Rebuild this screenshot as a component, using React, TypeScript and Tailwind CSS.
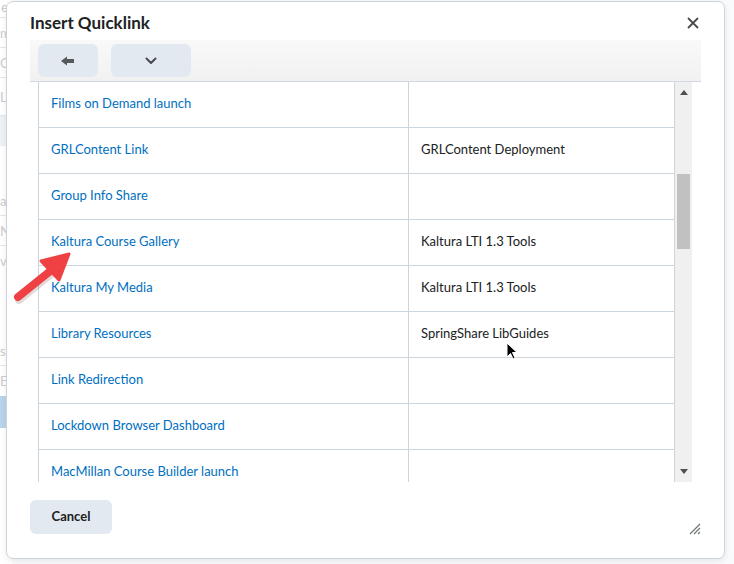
import React from 'react';

const rows: [string, string][] = [
  ['Films on Demand launch', ''],
  ['GRLContent Link', 'GRLContent Deployment'],
  ['Group Info Share', ''],
  ['Kaltura Course Gallery', 'Kaltura LTI 1.3 Tools'],
  ['Kaltura My Media', 'Kaltura LTI 1.3 Tools'],
  ['Library Resources', 'SpringShare LibGuides'],
  ['Link Redirection', ''],
  ['Lockdown Browser Dashboard', ''],
  ['MacMillan Course Builder launch', ''],
];

export default function App() {
  return (
    <div className="relative h-[564px] w-[734px] overflow-hidden bg-[#f9fafb] font-['Lato','Noto_Sans',sans-serif]">
      {/* page behind the modal */}
      <div className="flex h-full w-[12px] flex-col bg-white text-[13px] text-[#c9ccd0]">
        <div className="h-[18px] border-b border-[#e3e6ea] pl-[1px] leading-[14px]">e</div>
        <div className="h-[30px] border-b border-[#e3e6ea] leading-[30px]">m</div>
        <div className="h-[30px] border-b border-[#e3e6ea] leading-[30px]">C</div>
        <div className="h-[38px] border-b border-[#e3e6ea] leading-[38px]">L</div>
        <div className="h-[30px] bg-[#eef1f4]" />
        <div className="h-[40px]" />
        <div className="h-[30px] border-b border-[#e3e6ea] leading-[30px]">a</div>
        <div className="h-[30px] border-b border-[#e3e6ea] leading-[30px]">N</div>
        <div className="h-[30px] leading-[30px]">v</div>
        <div className="h-[60px]" />
        <div className="h-[30px] border-b border-[#e3e6ea] leading-[30px]">s</div>
        <div className="h-[30px] leading-[30px]">E</div>
        <div className="h-[32px] bg-[#b9d3ea]" />
      </div>

      {/* modal */}
      <div className="absolute left-[6px] top-[1px] flex h-[558px] w-[719px] flex-col rounded-[7px] border border-[#cdd5dc] bg-white shadow-[0_2px_6px_rgba(0,0,0,0.08)]">
        <div className="flex h-[38px] items-center justify-between pl-[23px] pr-[25px] pt-[3px]">
          <h1 className="text-[17px] font-bold text-[#202122]">Insert Quicklink</h1>
          <svg width="12" height="12" viewBox="0 0 12 12" className="text-[#494c4e]">
            <path d="M1.5 1.5L10.5 10.5M10.5 1.5L1.5 10.5" stroke="currentColor" strokeWidth="1.8" strokeLinecap="round" />
          </svg>
        </div>

        <div className="mx-[23px] flex h-[42px] items-center gap-[13px] border-b border-[#d3d9e3] bg-gradient-to-b from-[#f9f9f9] to-[#f1f1f1] px-[8px]">
          <button className="flex h-[33px] w-[60px] items-center justify-center rounded-[6px] bg-[#e3e9f1]">
            <svg width="14" height="10" viewBox="0 0 14 10">
              <path d="M0 5L6 0.5V3H13V7H6V9.5Z" fill="#565a5c" />
            </svg>
          </button>
          <button className="flex h-[33px] w-[80px] items-center justify-center rounded-[6px] bg-[#e3e9f1]">
            <svg width="12" height="8" viewBox="0 0 12 8">
              <path d="M1.5 1.5L6 6L10.5 1.5" stroke="#494c4e" strokeWidth="2" fill="none" strokeLinecap="round" strokeLinejoin="round" />
            </svg>
          </button>
        </div>

        <div className="ml-[31px] flex h-[400px] w-[654px] overflow-hidden">
          <div className="w-[637px]">
            <table className="-mt-[1px] w-[637px] border-collapse text-[13px]">
              <tbody>
                {rows.map(([a, b]) => (
                  <tr key={a} className="h-[46px]">
                    <td className="w-[370px] border-x border-b border-[#cdd5dc] pl-[12px] text-[#006fbf]">{a}</td>
                    <td className="border-x border-b border-[#cdd5dc] pl-[12px] text-[#202122]">{b}</td>
                  </tr>
                ))}
              </tbody>
            </table>
          </div>
          <div className="flex w-[17px] flex-col items-center bg-[#f0f0f0]">
            <svg width="8" height="5" viewBox="0 0 8 5" className="mt-[8px]">
              <path d="M0 5L4 0L8 5Z" fill="#505050" />
            </svg>
            <div className="mt-[79px] h-[75px] w-[13px] bg-[#c1c1c1]" />
            <div className="flex-1" />
            <svg width="8" height="5" viewBox="0 0 8 5" className="mb-[8px]">
              <path d="M0 0L8 0L4 5Z" fill="#505050" />
            </svg>
          </div>
        </div>

        <div className="flex flex-1 items-start justify-between pl-[23px] pr-[23px] pt-[18px]">
          <button className="h-[34px] w-[82px] rounded-[6px] bg-[#e3e9f1] text-[13px] font-bold text-[#202122]">Cancel</button>
          <svg width="12" height="12" viewBox="0 0 12 12" className="mt-[23px]">
            <path d="M1 11L11 1M5 11L11 5M9 11L11 9" stroke="#6e7376" strokeWidth="1.2" />
          </svg>
        </div>
      </div>

      {/* annotation arrow */}
      <svg className="absolute left-[10px] top-[245px]" width="70" height="62" viewBox="0 0 70 62">
        <line x1="8" y1="53" x2="44" y2="24" stroke="#3a0000" strokeOpacity="0.15" strokeWidth="8" strokeLinecap="round" transform="translate(1 2)" />
        <line x1="8" y1="52" x2="44" y2="23" stroke="#ef4044" strokeWidth="8" strokeLinecap="round" />
        <path d="M59 9L31 16L49 35Z" fill="#ef4044" stroke="#ef4044" strokeWidth="3" strokeLinejoin="round" />
      </svg>

      {/* mouse cursor */}
      <svg className="absolute left-[506px] top-[342px]" width="12" height="18" viewBox="0 0 12 18">
        <path d="M1 1V15L4.5 11.5L7 17L9 16L6.5 10.5H11Z" fill="#000" stroke="#fff" strokeWidth="1" strokeLinejoin="round" />
      </svg>
    </div>
  );
}
